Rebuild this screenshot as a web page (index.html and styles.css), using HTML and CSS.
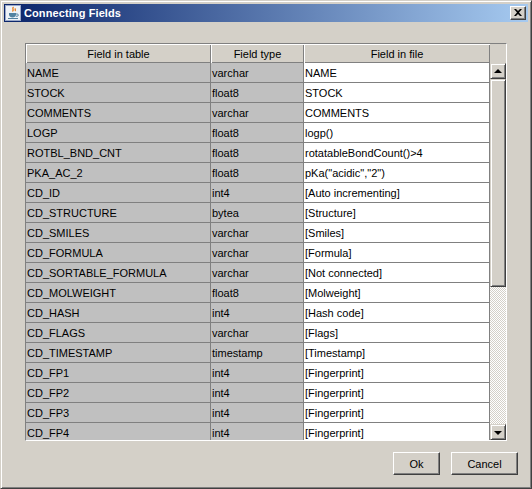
FILE: index.html
```html
<!DOCTYPE html>
<html>
<head>
<meta charset="utf-8">
<title>Connecting Fields</title>
<link rel="stylesheet" href="styles.css">
</head>
<body>
<div class="window">
  <div class="titlebar">
    <svg class="app-icon" width="16" height="16" viewBox="0 0 16 16">
      <rect x="0.5" y="0.5" width="15" height="15" fill="#eef2f8" stroke="#9aa8c8"/>
      <path d="M8.5 2 C6.5 3.5 9.5 4.5 7.5 6.5 M10.5 3.5 C9.5 4.5 11 5 10 6" fill="none" stroke="#e76f00" stroke-width="1.2"/>
      <path d="M4 8 h7 v1.5 c0 2 -1.8 3 -3.5 3 s-3.5 -1 -3.5 -3z" fill="#5382a1"/>
      <path d="M11 9 h1.2 a1.1 1.1 0 0 1 0 2.2 h-1.4" fill="none" stroke="#5382a1" stroke-width="1"/>
      <path d="M3 13.5 h10" stroke="#5382a1" stroke-width="1"/>
    </svg>
    <span class="title">Connecting Fields</span>
    <button class="close" aria-label="Close">
      <svg width="8" height="7" viewBox="0 0 8 7"><path d="M0 0h2l2 2l2 -2h2l-3 3.5l3 3.5h-2l-2 -2l-2 2h-2l3 -3.5z" fill="#000"/></svg>
    </button>
  </div>
  <div class="dialog">
    <div class="scrollpane">
      <div class="main">
        <div class="header">
          <div class="hcell">Field in table</div>
          <div class="hcell">Field type</div>
          <div class="hcell">Field in file</div>
          <div class="corner"></div>
        </div>
        <div class="body">
          <div class="viewport">
            <div class="row"><div class="c g">NAME</div><div class="c g">varchar</div><div class="c w">NAME</div></div>
            <div class="row"><div class="c g">STOCK</div><div class="c g">float8</div><div class="c w">STOCK</div></div>
            <div class="row"><div class="c g">COMMENTS</div><div class="c g">varchar</div><div class="c w">COMMENTS</div></div>
            <div class="row"><div class="c g">LOGP</div><div class="c g">float8</div><div class="c w">logp()</div></div>
            <div class="row"><div class="c g">ROTBL_BND_CNT</div><div class="c g">float8</div><div class="c w">rotatableBondCount()&gt;4</div></div>
            <div class="row"><div class="c g">PKA_AC_2</div><div class="c g">float8</div><div class="c w">pKa("acidic","2")</div></div>
            <div class="row"><div class="c g">CD_ID</div><div class="c g">int4</div><div class="c w">[Auto incrementing]</div></div>
            <div class="row"><div class="c g">CD_STRUCTURE</div><div class="c g">bytea</div><div class="c w">[Structure]</div></div>
            <div class="row"><div class="c g">CD_SMILES</div><div class="c g">varchar</div><div class="c w">[Smiles]</div></div>
            <div class="row"><div class="c g">CD_FORMULA</div><div class="c g">varchar</div><div class="c w">[Formula]</div></div>
            <div class="row"><div class="c g">CD_SORTABLE_FORMULA</div><div class="c g">varchar</div><div class="c w">[Not connected]</div></div>
            <div class="row"><div class="c g">CD_MOLWEIGHT</div><div class="c g">float8</div><div class="c w">[Molweight]</div></div>
            <div class="row"><div class="c g">CD_HASH</div><div class="c g">int4</div><div class="c w">[Hash code]</div></div>
            <div class="row"><div class="c g">CD_FLAGS</div><div class="c g">varchar</div><div class="c w">[Flags]</div></div>
            <div class="row"><div class="c g">CD_TIMESTAMP</div><div class="c g">timestamp</div><div class="c w">[Timestamp]</div></div>
            <div class="row"><div class="c g">CD_FP1</div><div class="c g">int4</div><div class="c w">[Fingerprint]</div></div>
            <div class="row"><div class="c g">CD_FP2</div><div class="c g">int4</div><div class="c w">[Fingerprint]</div></div>
            <div class="row"><div class="c g">CD_FP3</div><div class="c g">int4</div><div class="c w">[Fingerprint]</div></div>
            <div class="row"><div class="c g">CD_FP4</div><div class="c g">int4</div><div class="c w">[Fingerprint]</div></div>
          </div>
          <div class="vscroll">
            <div class="sbtn"><span class="arrow up"></span></div>
            <div class="thumb"></div>
            <div class="track"></div>
            <div class="sbtn"><span class="arrow down"></span></div>
          </div>
        </div>
      </div>
    </div>
    <div class="buttons">
      <button class="btn ok">Ok</button>
      <button class="btn cancel">Cancel</button>
    </div>
  </div>
</div>
</body>
</html>
```

FILE: styles.css
```css
html, body {
  margin: 0;
  padding: 0;
  background: #d4d0c8;
}
body {
  font-family: "Liberation Sans", Arial, sans-serif;
  font-size: 11px;
  color: #000;
}
.window {
  width: 532px;
  height: 489px;
  box-sizing: border-box;
  background: #d4d0c8;
  border: 1px solid;
  border-color: #d4d0c8 #404040 #404040 #d4d0c8;
  box-shadow: inset 1px 1px #ffffff, inset -1px -1px #808080;
  padding: 3px;
  display: flex;
  flex-direction: column;
}
.titlebar {
  height: 18px;
  flex: none;
  display: flex;
  align-items: center;
  background: linear-gradient(to right, #0a246a, #a6caf0);
  padding-left: 1px;
}
.app-icon {
  flex: none;
  display: block;
}
.title {
  color: #fff;
  font-weight: bold;
  font-size: 11px;
  margin-left: 3px;
  letter-spacing: 0.1px;
}
.close {
  margin-left: auto;
  margin-right: 2px;
  width: 16px;
  height: 14px;
  padding: 0;
  background: #d4d0c8;
  border: 1px solid;
  border-color: #ffffff #404040 #404040 #ffffff;
  box-shadow: inset -1px -1px #808080;
  display: flex;
  align-items: center;
  justify-content: center;
}
.close svg { display: block; margin-top: -1px; }
.dialog {
  flex: 1;
  display: flex;
  flex-direction: column;
}
.scrollpane {
  margin: 21px 21px 0;
  width: 482px;
  height: 398px;
  box-sizing: border-box;
  border: 1px solid;
  border-color: #808080 #ffffff #ffffff #808080;
  overflow: hidden;
}
.main {
  display: flex;
  flex-direction: column;
  height: 100%;
}
.header {
  display: grid;
  grid-template-columns: 185px 93px 186px 16px;
  height: 19px;
  flex: none;
}
.hcell {
  box-sizing: border-box;
  background: #d4d0c8;
  box-shadow: inset 1px 1px #ffffff, inset -1px -1px #808080;
  text-align: center;
  padding-top: 1px;
  line-height: 18px;
  white-space: nowrap;
  overflow: hidden;
}
.corner { background: #d4d0c8; }
.body {
  display: flex;
  height: 377px;
}
.viewport {
  width: 464px;
  overflow: hidden;
  background: #fff;
}
.row {
  display: grid;
  grid-template-columns: 185px 93px 186px;
  height: 20px;
}
.c {
  box-sizing: border-box;
  border-right: 1px solid #808080;
  border-bottom: 1px solid #808080;
  padding-left: 1px;
  padding-top: 1px;
  line-height: 18px;
  white-space: nowrap;
  overflow: hidden;
}
.g { background: #c0c0c0; }
.w { background: #ffffff; }
.vscroll {
  width: 16px;
  display: flex;
  flex-direction: column;
}
.sbtn, .thumb {
  box-sizing: border-box;
  background: #d4d0c8;
  border: 1px solid;
  border-color: #d4d0c8 #404040 #404040 #d4d0c8;
  box-shadow: inset 1px 1px #ffffff, inset -1px -1px #808080;
}
.sbtn {
  height: 16px;
  flex: none;
  display: flex;
  align-items: center;
  justify-content: center;
}
.thumb {
  height: 208px;
  flex: none;
}
.track {
  flex: 1;
  background-color: #ffffff;
  background-image: conic-gradient(#d4d0c8 25%, #ffffff 0 50%, #d4d0c8 0 75%, #ffffff 0);
  background-size: 2px 2px;
}
.arrow {
  width: 0;
  height: 0;
  border-left: 4px solid transparent;
  border-right: 4px solid transparent;
}
.arrow.up { border-bottom: 4px solid #000; margin-top: -1px; }
.arrow.down { border-top: 4px solid #000; margin-top: 1px; }
.buttons {
  display: flex;
  justify-content: flex-end;
  gap: 11px;
  margin: 11px 10px 0 0;
}
.btn {
  height: 23px;
  box-sizing: border-box;
  background: #d4d0c8;
  border: 1px solid;
  border-color: #ffffff #404040 #404040 #ffffff;
  box-shadow: inset -1px -1px #808080;
  font-family: "Liberation Sans", Arial, sans-serif;
  font-size: 11px;
  color: #000;
  padding: 0;
}
.ok { width: 47px; }
.cancel { width: 67px; }
```
